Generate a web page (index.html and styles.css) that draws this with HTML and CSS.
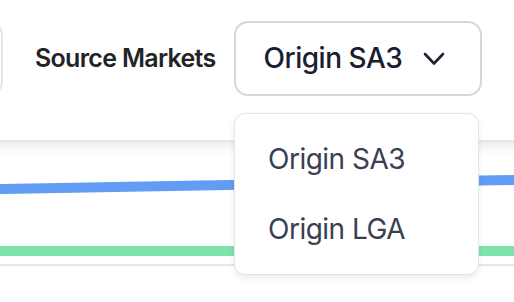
FILE: index.html
```html
<!DOCTYPE html>
<html>
<head>
<meta charset="utf-8">
<link rel="stylesheet" href="styles.css">
</head>
<body>
<div class="page">
  <div class="filters">
    <div class="btn-prev"></div>
    <span class="label">Source Markets</span>
    <div class="select">
      <span class="select-text">Origin SA3</span>
      <svg class="chev" width="22" height="14" viewBox="0 0 22 14"><polyline points="2,2 11,11.5 20,2" fill="none" stroke="#1a2233" stroke-width="2.6" stroke-linecap="round" stroke-linejoin="round"/></svg>
    </div>
    <span class="label next">Year</span>
  </div>
  <div class="chart">
    <svg class="lines" width="514" height="124" viewBox="0 0 514 124">
      <path d="M-2 49 C 120 47, 240 44, 516 40" fill="none" stroke="#629cf4" stroke-width="10"/>
      <line x1="0" y1="111" x2="514" y2="111" stroke="#7ee3aa" stroke-width="10"/>
    </svg>
  </div>
  <div class="menu">
    <div class="item">Origin SA3</div>
    <div class="item">Origin LGA</div>
  </div>
</div>
</body>
</html>
```
FILE: styles.css
```css
* { box-sizing: border-box; }
body { margin: 0; background: #fff; }
.page {
  position: relative;
  width: 514px;
  height: 302px;
  overflow: hidden;
  background: #fff;
  font-family: Inter, "Noto Sans", sans-serif;
}
.filters {
  display: flex;
  align-items: center;
  height: 140px;
  padding-bottom: 24px;
  white-space: nowrap;
}
.btn-prev {
  flex: none;
  width: 120px;
  height: 75px;
  margin-left: -117px;
  border: 2px solid #e2e4e9;
  border-radius: 14px;
}
.label {
  flex: none;
  margin-left: 32px;
  font-size: 25px;
  font-weight: 600;
  color: #222327;
  letter-spacing: -0.7px;
}
.select {
  flex: none;
  display: flex;
  align-items: center;
  margin-left: 18px;
  width: 248px;
  height: 75px;
  padding-left: 28px;
  border: 2px solid #d4d7de;
  border-radius: 14px;
}
.select-text {
  font-size: 28px;
  font-weight: 500;
  color: #182031;
  letter-spacing: -0.5px;
}
.chev { margin-left: 21px; margin-top: 1px; }
.label.next { margin-left: 33px; }
.chart {
  height: 126px;
  border-bottom: 2px solid #e6e7eb;
  background: linear-gradient(#e2e3e7 0, #efeff2 3px, #f8f8fa 8px, #fff 16px);
}
.lines { display: block; }
.menu {
  position: absolute;
  left: 234px;
  top: 113px;
  width: 245px;
  height: 162px;
  padding: 10px 0;
  background: #fff;
  border: 1.5px solid #e4e5ea;
  border-radius: 11px;
  box-shadow: 0 3px 6px rgba(0, 0, 0, 0.08);
}
.item {
  height: 70px;
  display: flex;
  align-items: center;
  padding-left: 33px;
  font-size: 28px;
  color: #394052;
  letter-spacing: -0.5px;
}
```
